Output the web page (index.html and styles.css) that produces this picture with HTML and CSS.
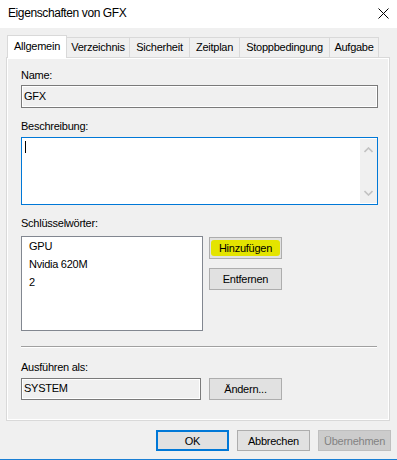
FILE: index.html
```html
<!DOCTYPE html>
<html lang="de">

<head>
    <meta charset="UTF-8">
    <meta name="viewport" content="width=device-width, initial-scale=1.0">
    <title>Eigenschaften von GFX</title>
    <link rel="stylesheet" href="styles.css">
</head>

<body>
    <div class="window">
        <!-- Titelleiste -->
        <div class="titlebar">
            <span class="title">Eigenschaften von GFX</span>
            <svg class="close" width="11" height="11" viewBox="0 0 11 11">
                <path d="M0.5 0.5 L10.5 10.5 M10.5 0.5 L0.5 10.5" stroke="#000" stroke-width="1" fill="none" />
            </svg>
        </div>

        <div class="dialog">
            <div class="tabs">
                <div class="tab active w1">Allgemein</div>
                <div class="tab w2">Verzeichnis</div>
                <div class="tab w3">Sicherheit</div>
                <div class="tab w4">Zeitplan</div>
                <div class="tab w5">Stoppbedingung</div>
                <div class="tab w6">Aufgabe</div>
            </div>

            <div class="panel">
                <div class="label l-name">Name:</div>
                <div class="field name-field">GFX</div>

                <div class="label l-desc">Beschreibung:</div>
                <div class="memo">
                    <div class="memo-text"><span class="caret"></span></div>
                    <div class="vscroll">
                        <svg width="9" height="6" viewBox="0 0 9 6">
                            <path d="M0.5 5 L4.5 1 L8.5 5" stroke="#c2c2c2" stroke-width="1.6" fill="none" />
                        </svg>
                        <svg width="9" height="6" viewBox="0 0 9 6">
                            <path d="M0.5 1 L4.5 5 L8.5 1" stroke="#c2c2c2" stroke-width="1.6" fill="none" />
                        </svg>
                    </div>
                </div>

                <div class="label l-keys">Schlüsselwörter:</div>
                <div class="keys-row">
                    <div class="listbox">
                        <div class="item">GPU</div>
                        <div class="item">Nvidia 620M</div>
                        <div class="item">2</div>
                    </div>
                    <div class="side-buttons">
                        <div class="btn"><span class="marker">Hinzufügen</span></div>
                        <div class="btn">Entfernen</div>
                    </div>
                </div>

                <div class="separator"></div>

                <div class="label l-run">Ausführen als:</div>
                <div class="run-row">
                    <div class="field run-field">SYSTEM</div>
                    <div class="btn">Ändern...</div>
                </div>
            </div>

            <div class="footer">
                <div class="btn dlg default">OK</div>
                <div class="btn dlg">Abbrechen</div>
                <div class="btn dlg disabled">Übernehmen</div>
            </div>
        </div>
    </div>
</body>

</html>
```

FILE: styles.css
```css
* {
    margin: 0;
    padding: 0;
    box-sizing: border-box;
}

body {
    width: 397px;
    height: 460px;
    overflow: hidden;
    background-color: #f0f0f0;
    font-family: "Liberation Sans", Arial, sans-serif;
    font-size: 11px;
    letter-spacing: -0.25px;
    color: #000;
}

.window {
    height: 460px;
    border-bottom: 1px solid #1a7fd4;
}

/* Titelleiste */
.titlebar {
    height: 28px;
    background-color: #fff;
    display: flex;
    align-items: center;
    justify-content: space-between;
    padding: 0 9px 2px 8px;
}

.title {
    font-size: 12px;
    letter-spacing: -0.4px;
}

.close {
    margin-right: -1px;
}

.dialog {
    height: 431px;
    padding-top: 7px;
}

/* Reiter */
.tabs {
    display: flex;
    align-items: flex-end;
    height: 22px;
    padding-left: 7px;
}

.tab {
    height: 20px;
    border: 1px solid #d9d9d9;
    border-bottom: none;
    margin-left: -1px;
    background-color: #f0f0f0;
    display: flex;
    align-items: center;
    justify-content: center;
    padding-bottom: 1px;
}

.tab.active {
    height: 23px;
    margin-left: 0;
    margin-bottom: -1px;
    background-color: #fff;
    position: relative;
    z-index: 1;
    padding-bottom: 2px;
}

.w1 { width: 60px; }
.w2 { width: 64px; }
.w3 { width: 61px; }
.w4 { width: 51px; }
.w5 { width: 91px; }
.w6 { width: 50px; }

.panel {
    margin-left: 6px;
    width: 384px;
    height: 364px;
    border: 1px solid #d9d9d9;
    box-shadow: inset 1px 1px 0 #fff, inset -1px -1px 0 #fff;
    padding: 10px 0 0 14px;
}

.label {
    height: 14px;
    line-height: 14px;
}

.l-desc { margin-top: 11px; }
.l-keys { margin-top: 11px; }
.l-run { margin-top: 12px; }

.field {
    border: 1px solid #7a7a7a;
    box-shadow: inset 1px 1px 0 #fff, inset -1px -1px 0 #fff;
    background-color: #f0f0f0;
    line-height: 20px;
    padding-left: 2px;
}

.name-field {
    margin-top: 3px;
    width: 357px;
    height: 23px;
}

/* Beschreibung */
.memo {
    margin-top: 4px;
    width: 357px;
    height: 68px;
    border: 1px solid #0078d7;
    background-color: #fff;
    display: flex;
}

.memo-text {
    flex: 1;
    padding: 3px 0 0 3px;
}

.caret {
    display: block;
    width: 1px;
    height: 12px;
    background-color: #000;
}

.vscroll {
    width: 17px;
    margin: 1px 0;
    background-color: #f0f0f0;
    display: flex;
    flex-direction: column;
    justify-content: space-between;
    align-items: center;
    padding: 8px 0 7px;
}

/* Schlüsselwörter */
.keys-row {
    margin-top: 6px;
    display: flex;
    gap: 6px;
}

.listbox {
    width: 182px;
    height: 95px;
    border: 1px solid #828790;
    background-color: #fff;
    padding-left: 7px;
}

.item {
    height: 18px;
    line-height: 18px;
}

.side-buttons {
    padding-top: 1px;
    display: flex;
    flex-direction: column;
    gap: 9px;
}

.btn {
    width: 73px;
    height: 22px;
    border: 1px solid #adadad;
    background-color: #e1e1e1;
    display: flex;
    align-items: center;
    justify-content: center;
}

.marker {
    align-self: stretch;
    flex: 1;
    margin: 2px 1px;
    background-color: #e4e400;
    border-radius: 3px;
    display: flex;
    align-items: center;
    justify-content: center;
}

.separator {
    margin-top: 15px;
    width: 356px;
    height: 2px;
    border-top: 1px solid #a0a0a0;
    border-bottom: 1px solid #fff;
}

.run-row {
    margin-top: 4px;
    display: flex;
    gap: 8px;
}

.run-field {
    width: 180px;
    height: 22px;
    line-height: 19px;
}

/* Dialogknöpfe */
.footer {
    margin-top: 9px;
    display: flex;
    justify-content: flex-end;
    gap: 8px;
    padding-right: 6px;
}

.btn.dlg {
    height: 21px;
}

.btn.default {
    border: 2px solid #0078d7;
}

.btn.disabled {
    background-color: #cccccc;
    border-color: #bfbfbf;
    color: #838383;
}
```
